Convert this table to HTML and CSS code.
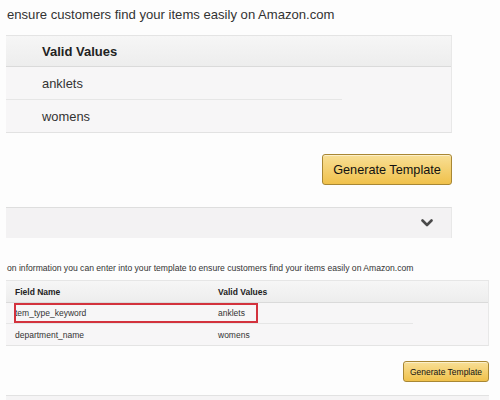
FILE: index.html
```html
<!DOCTYPE html>
<html>
<head>
<meta charset="utf-8">
<link rel="stylesheet" href="styles.css">
</head>
<body>
<section class="shot shot-lg">
  <p class="intro">ensure customers find your items easily on Amazon.com</p>
  <div class="tbl">
    <div class="head">Valid Values</div>
    <div class="row sep">anklets</div>
    <div class="row">womens</div>
  </div>
  <div class="actions"><button class="btn">Generate Template</button></div>
  <div class="bar">
    <svg class="chev" width="12" height="8" viewBox="0 0 12 8"><path d="M1.5 1.5 L6 6 L10.5 1.5" fill="none" stroke="#4a4a4a" stroke-width="2.6" stroke-linecap="round" stroke-linejoin="round"/></svg>
  </div>
</section>
<section class="shot shot-sm">
  <p class="intro">on information you can enter into your template to ensure customers find your items easily on Amazon.com</p>
  <div class="tbl">
    <div class="head"><span class="c1">Field Name</span><span>Valid Values</span></div>
    <div class="row sep"><span class="c1">tem_type_keyword</span><span>anklets</span><i class="mark"></i></div>
    <div class="row"><span class="c1">department_name</span><span>womens</span></div>
  </div>
  <div class="actions"><button class="btn">Generate Template</button></div>
  <div class="bar"></div>
</section>
</body>
</html>
```
FILE: styles.css
```css
html, body {
  margin: 0;
  padding: 0;
  background: #fdfdfd;
  font-family: "Liberation Sans", Arial, sans-serif;
  color: #333;
  overflow: hidden;
}

.intro {
  margin: 0 0 0 7px;
}

.btn {
  font-family: "Liberation Sans", Arial, sans-serif;
  color: #111;
  background: linear-gradient(#f8df96, #f0c14b);
  border: 1px solid #a88734;
  border-radius: 3px;
  box-shadow: 0 1px 0 rgba(255,255,255,.5) inset;
  padding: 0;
  cursor: pointer;
}

/* ---------- large (zoomed) shot ---------- */
.shot-lg {
  padding-top: 6px;
}
.shot-lg .intro {
  font-size: 13.1px;
  line-height: 18px;
}
.shot-lg .tbl {
  margin: 11px 0 0 6px;
  width: 446px;
  box-sizing: border-box;
  border-top: 1px solid #e4e4e4;
  border-right: 1px solid #e8e8e8;
  border-bottom: 1px solid #e2e2e2;
  background: #f7f6f7;
}
.shot-lg .head {
  height: 30px;
  display: flex;
  align-items: center;
  padding-left: 36px;
  background: linear-gradient(#f6f6f6, #ededed);
  border-bottom: 1px solid #dadada;
  font-weight: bold;
  font-size: 13px;
  color: #222;
}
.shot-lg .row {
  height: 32px;
  display: flex;
  align-items: center;
  padding-left: 36px;
  font-size: 12.9px;
  color: #333;
}
.shot-lg .row.sep {
  width: 336px;
  box-sizing: border-box;
  height: 33px;
  border-bottom: 1px solid #e6e6e6;
}
.shot-lg .actions {
  width: 452px;
  display: flex;
  justify-content: flex-end;
  margin-top: 21px;
}
.shot-lg .btn {
  width: 130px;
  height: 31px;
  font-size: 12.7px;
}
.shot-lg .bar {
  margin: 22px 0 0 6px;
  width: 446px;
  height: 31px;
  box-sizing: border-box;
  background: #f3f2f3;
  border-top: 1px solid #dedede;
  border-right: 1px solid #e8e8e8;
  display: flex;
  align-items: center;
  justify-content: flex-end;
  padding-right: 18px;
}

/* ---------- small shot ---------- */
.shot-sm {
  padding-top: 24px;
}
.shot-sm .intro {
  font-size: 8.6px;
  line-height: 12px;
}
.shot-sm .tbl {
  margin: 6px 0 0 6px;
  width: 483px;
  box-sizing: border-box;
  border-top: 1px solid #e6e6e6;
  border-right: 1px solid #e8e8e8;
  border-bottom: 1px solid #e4e4e4;
  background: #f7f6f7;
  font-size: 8.5px;
}
.shot-sm .head {
  height: 21px;
  display: flex;
  align-items: center;
  padding-left: 9px;
  background: linear-gradient(#f6f6f6, #ededed);
  border-bottom: 1px solid #dadada;
  font-weight: bold;
  color: #222;
}
.shot-sm .row {
  position: relative;
  height: 21px;
  display: flex;
  align-items: center;
  padding-left: 9px;
  color: #333;
}
.shot-sm .row.sep {
  width: 407px;
  box-sizing: border-box;
  height: 21px;
  border-bottom: 1px solid #e6e6e6;
}
.shot-sm .c1 {
  width: 203px;
  flex: none;
}
.shot-sm .mark {
  position: absolute;
  left: 8px;
  top: 0;
  width: 244px;
  height: 20px;
  box-sizing: border-box;
  border: 2px solid #d3323d;
}
.shot-sm .actions {
  width: 489px;
  display: flex;
  justify-content: flex-end;
  margin-top: 15px;
}
.shot-sm .btn {
  width: 86px;
  height: 21px;
  font-size: 8.5px;
}
.shot-sm .bar {
  margin: 13px 0 0 6px;
  width: 483px;
  height: 20px;
  background: #f5f4f5;
  border-top: 1px solid #e2e2e2;
}
```
